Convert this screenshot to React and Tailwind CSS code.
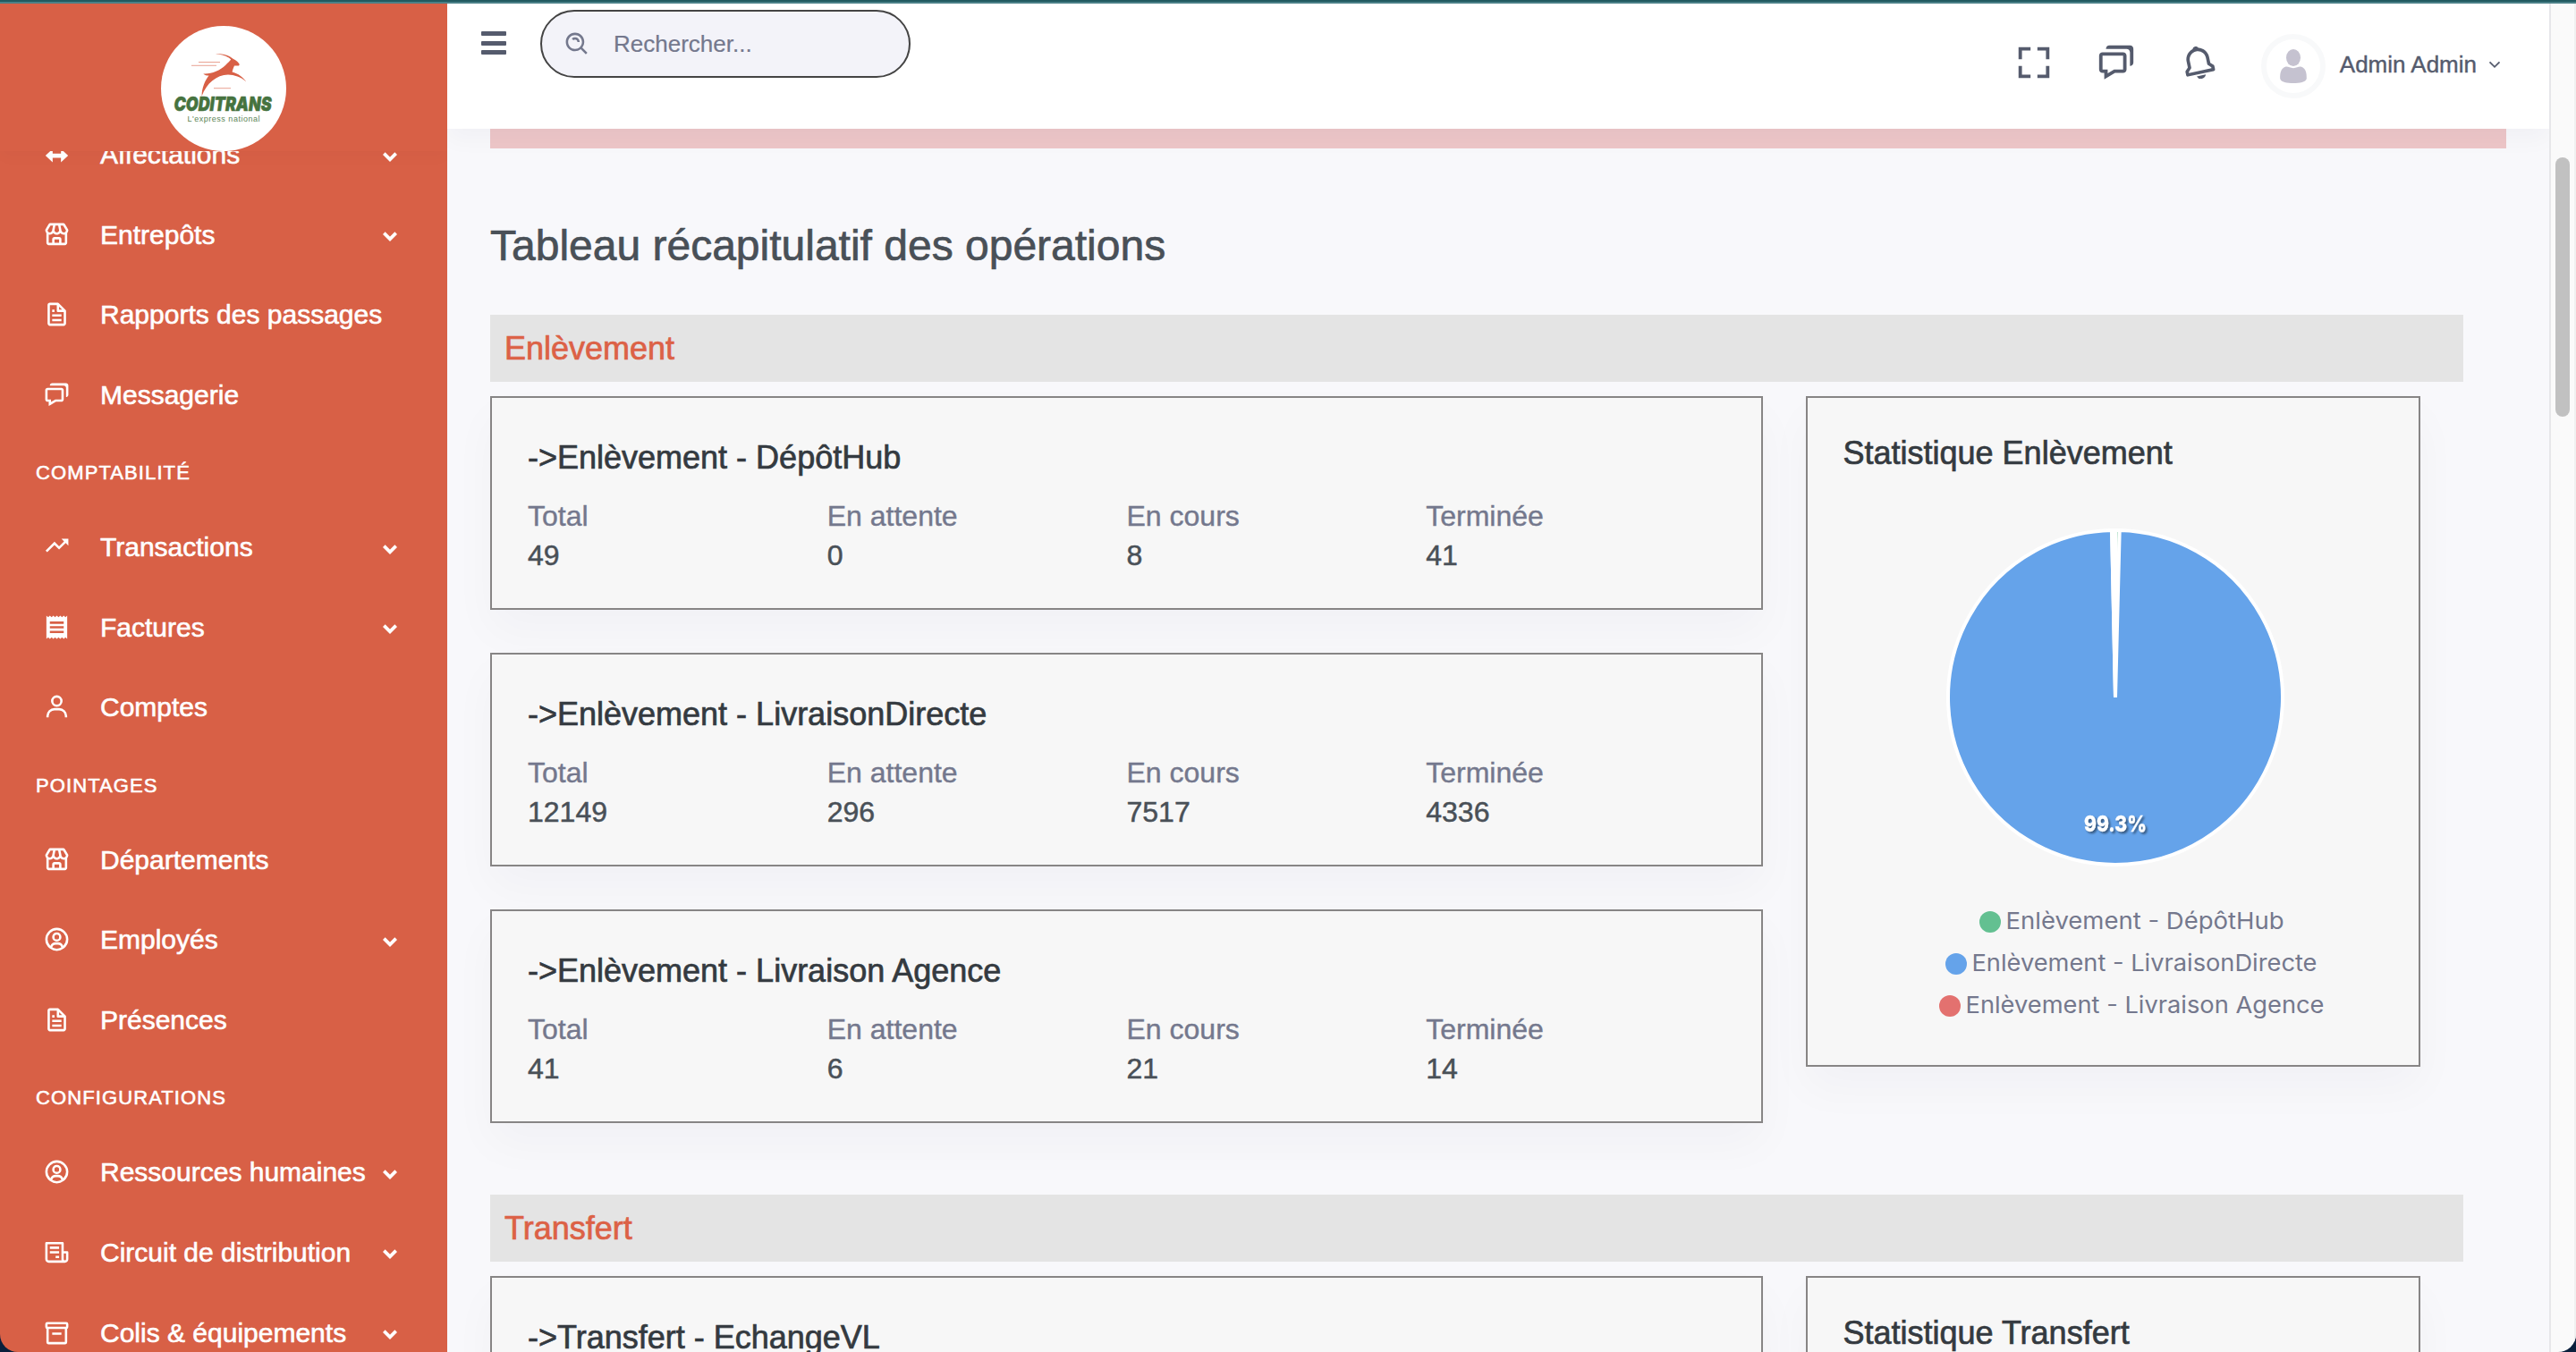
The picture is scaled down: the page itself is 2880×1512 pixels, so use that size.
import {
  BiStore, BiFile, BiChat, BiTrendingUp, BiUser, BiUserCircle,
  BiReceipt, BiSearchAlt, BiFullscreen, BiBell,
} from "react-icons/bi";

function ArrowsIcon({ className }) {
  return (
    <svg viewBox="0 0 24 24" fill="currentColor" className={className}>
      <path d="M2.2 13.2 L8.4 7.4 V11.4 H15.6 V7.4 L21.8 13.2 L15.6 19 V15 H8.4 V19 Z" />
    </svg>
  );
}

function ReceiptIcon({ className }) {
  return (
    <svg viewBox="0 0 24 24" fill="currentColor" className={className}>
      <path d="M18 9H6V7h12m0 6H6v-2h12m0 6H6v-2h12M3 22l1.500-1.200L6 22l1.500-1.200L9 22l1.500-1.200L12 22l1.500-1.200L15 22l1.500-1.200L18 22l1.500-1.200L21 22V2l-1.500 1.200L18 2l-1.500 1.200L15 2l-1.500 1.200L12 2l-1.500 1.200L9 2L7.500 3.200L6 2L4.500 3.200L3 2Z" />
    </svg>
  );
}

function BoxIcon({ className }) {
  return (
    <svg viewBox="0 0 24 24" fill="none" stroke="currentColor" strokeWidth="2" className={className}>
      <rect x="3" y="3.700" width="18" height="4" rx="0.8" />
      <path d="M4 8 V20 a1 1 0 0 0 1 1 H19 a1 1 0 0 0 1 -1 V8 M8 12.800 H16" />
    </svg>
  );
}

const menu = [
  { label: "Affectations", icon: ArrowsIcon, more: true },
  { label: "Entrepôts", icon: BiStore, more: true },
  { label: "Rapports des passages", icon: BiFile },
  { label: "Messagerie", icon: BiChat },
  { section: "COMPTABILITÉ" },
  { label: "Transactions", icon: BiTrendingUp, more: true },
  { label: "Factures", icon: ReceiptIcon, more: true },
  { label: "Comptes", icon: BiUser },
  { section: "POINTAGES" },
  { label: "Départements", icon: BiStore },
  { label: "Employés", icon: BiUserCircle, more: true },
  { label: "Présences", icon: BiFile },
  { section: "CONFIGURATIONS" },
  { label: "Ressources humaines", icon: BiUserCircle, more: true },
  { label: "Circuit de distribution", icon: BiReceipt, more: true },
  { label: "Colis & équipements", icon: BoxIcon, more: true },
];

const pickups = [
  { title: "->Enlèvement - DépôtHub", values: ["49", "0", "8", "41"] },
  { title: "->Enlèvement - LivraisonDirecte", values: ["12149", "296", "7517", "4336"] },
  { title: "->Enlèvement - Livraison Agence", values: ["41", "6", "21", "14"] },
];

const labels = ["Total", "En attente", "En cours", "Terminée"];

function Chevron({ className, width }) {
  return (
    <svg viewBox="0 0 16 11" fill="none" stroke="currentColor" strokeWidth={width} className={className}>
      <path d="M1.3 1.6 L8 8.3 L14.7 1.6" />
    </svg>
  );
}

function Logo() {
  return (
    <svg viewBox="0 0 140 140" className="h-[140px] w-[140px] shrink-0">
      <circle cx="70" cy="70" r="70" fill="#fff" />
      <g fill="#d86046">
        <path d="M61 31.600 C68 30 76 33 81 37 C84 38.500 87 41 87.800 43 L87 44.600 L82 44.600 C81 47 80 49 79.600 51.600 C86 53 92 58 95.300 62.400 C89 57 82 54.800 75 54.600 C62 55 51 64 45.600 78.600 C45.500 70 49 61 53.500 55.500 C51 55.500 49 55 47.300 53.400 C56 54 66 50 72 44 C75 41 77 39 78.200 37.500 C73 33 67 31.600 61 31.600 Z" />
      </g>
      <g stroke="#d86046" strokeWidth="0.9" opacity="0.65">
        <path d="M42 40.500 H66 M34 44.300 H62 M59 69.700 H78" />
      </g>
      <text x="69" y="95" textAnchor="middle" textLength="109" lengthAdjust="spacingAndGlyphs"
        fontFamily="Inter" fontWeight="900" fontStyle="italic" fontSize="22" fill="#46733f" stroke="#46733f" strokeWidth="0.6">CODITRANS</text>
      <text x="70" y="107" textAnchor="middle" textLength="81" fontFamily="Liberation Sans" fontSize="9" fill="#5c8556">L'express national</text>
    </svg>
  );
}

function Sidebar() {
  return (
    <aside className="flex w-[500px] shrink-0 flex-col overflow-hidden bg-[#d86046] text-white">
      <div className="z-10 flex h-[165px] shrink-0 justify-center bg-[#d86046] pt-[25px] shadow-[0_8px_16px_rgba(18,38,63,0.02)]">
        <Logo />
      </div>
      <nav className="-mt-[40.800px] flex flex-col">
        {menu.map((m) => {
          if (m.section) {
            return (
              <div key={m.section} className="flex h-[80.800px] shrink-0 items-center pt-[3px] pl-[40px] text-[22px] tracking-[1.1px] [-webkit-text-stroke:0.6px_currentColor]">
                {m.section}
              </div>
            );
          }
          const Icon = m.icon;
          return (
            <div key={m.label} className="flex h-[89.600px] shrink-0 items-center pr-[56px] pl-[47.500px]">
              <Icon className="-mt-[1px] h-[31px] w-[31px] shrink-0" />
              <span className="-mt-[1px] ml-[33.500px] flex-1 text-[30px] whitespace-nowrap [-webkit-text-stroke:0.6px_currentColor]">{m.label}</span>
              {m.more && <Chevron width={3.800} className="mt-[4px] h-[11px] w-[16px] shrink-0" />}
            </div>
          );
        })}
      </nav>
    </aside>
  );
}

function Topbar() {
  return (
    <header className="z-10 flex h-[140px] shrink-0 bg-white text-[#555b6d] shadow-[0_12px_24px_rgba(18,38,63,0.03)]">
      <div className="mt-[31px] ml-[38px] flex h-[26px] w-[28px] flex-col justify-between">
        <span className="h-[5px] rounded-[1px] bg-[#555b6d]" />
        <span className="h-[5px] rounded-[1px] bg-[#555b6d]" />
        <span className="h-[5px] rounded-[1px] bg-[#555b6d]" />
      </div>
      <div className="mt-[7px] ml-[38px] flex h-[76px] w-[414px] items-center rounded-full border-2 border-[#444] bg-[#f3f3f9] pl-[24px] text-[26px] text-[#74788d]">
        <BiSearchAlt className="h-[31px] w-[31px]" />
        <span className="ml-[25px] [-webkit-text-stroke:0.2px_currentColor]">Rechercher...</span>
      </div>
      <div className="ml-auto flex h-[132px] items-center">
        <BiFullscreen className="h-[46px] w-[46px]" />
        <BiChat className="ml-[46px] h-[46px] w-[46px]" />
        <BiBell className="ml-[47px] h-[44px] w-[44px] -rotate-12" />
        <div className="mt-[8px] ml-[48px] flex h-[72px] w-[72px] items-center justify-center rounded-full border-[6px] border-[#f8f9fa]">
          <svg viewBox="0 0 30 38" className="h-[38px] w-[30px]" fill="#c5c2d0">
            <ellipse cx="15" cy="9.500" rx="8" ry="9.500" />
            <path d="M6 19.800 C9 19 11 21.200 15 21.200 C19 21.200 21 19 24 19.800 C29 21.500 30 27 29.800 33 C29 37 22 38 15 38 C8 38 1 37 0.200 33 C0 27 1 21.500 6 19.800 Z" />
          </svg>
        </div>
        <span className="mt-[5px] ml-[16px] text-[26px] whitespace-nowrap [-webkit-text-stroke:0.4px_currentColor]">Admin Admin</span>
        <Chevron width={2.200} className="mt-[5px] mr-[54px] ml-[13px] h-[9px] w-[14px]" />
      </div>
    </header>
  );
}

function SectionBar({ children }) {
  return (
    <h2 className="flex h-[75px] w-[2206px] shrink-0 items-center bg-[#e4e4e4] pl-[16px] text-[36px] text-[#dc6146] [-webkit-text-stroke:0.7px_currentColor]">
      {children}
    </h2>
  );
}

function StatCard({ title, values }) {
  return (
    <div className="h-[239px] w-[1423px] border-2 border-[#878585] bg-[#f7f7f7] px-[40px] pt-[45px] shadow-[0_24px_48px_rgba(18,38,63,0.03)]">
      <h3 className="text-[36px] leading-[44px] text-[#343a40] [-webkit-text-stroke:0.7px_currentColor]">{title}</h3>
      <div className="mt-[21px] grid grid-cols-4 text-[32px] leading-[44px]">
        {values.map((v, i) => (
          <div key={labels[i]}>
            <p className="text-[#74788d] [-webkit-text-stroke:0.4px_currentColor]">{labels[i]}</p>
            <p className="text-[#495057] [-webkit-text-stroke:0.5px_currentColor]">{v}</p>
          </div>
        ))}
      </div>
    </div>
  );
}

const slices = [
  { name: "Enlèvement - DépôtHub", value: 49, color: "#63c091", dot: "bg-[#63c091]", length: 311, row: "ml-[192px]" },
  { name: "Enlèvement - LivraisonDirecte", value: 12149, color: "#65a3ea", dot: "bg-[#65a3ea]", length: 386, row: "ml-[154px]" },
  { name: "Enlèvement - Livraison Agence", value: 41, color: "#e3716f", dot: "bg-[#e3716f]", length: 401, row: "ml-[147px]" },
];

function Pie() {
  const total = slices.reduce((sum, s) => sum + s.value, 0);
  const at = (share) => {
    const a = share * 2 * Math.PI - Math.PI / 2;
    return `${200 + 187 * Math.cos(a)} ${200 + 187 * Math.sin(a)}`;
  };
  let from = 0;
  return (
    <svg viewBox="0 0 400 400" className="h-[400px] w-[400px]">
      {slices.map((s) => {
        const to = from + s.value / total;
        const d = `M200 200 L${at(from)} A187 187 0 ${to - from > 0.5 ? 1 : 0} 1 ${at(to)} Z`;
        from = to;
        return <path key={s.name} d={d} fill={s.color} stroke="#fff" strokeWidth="4" />;
      })}
      <text x="200" y="350" textAnchor="middle" textLength="70" lengthAdjust="spacingAndGlyphs" fontFamily="Inter" fontWeight="800" fontSize="25"
        fill="#fff" stroke="#fff" strokeWidth="0.4" className="[filter:drop-shadow(2px_2px_1px_rgba(0,0,0,0.45))]">99.3%</text>
    </svg>
  );
}

function ChartCard() {
  return (
    <div className="flex h-[750px] w-[687px] flex-col border-2 border-[#878585] bg-[#f7f7f7] pt-[40px] shadow-[0_24px_48px_rgba(18,38,63,0.03)]">
      <h3 className="pl-[39.500px] text-[36px] leading-[44px] text-[#343a40] [-webkit-text-stroke:0.7px_currentColor]">Statistique Enlèvement</h3>
      <div className="mt-[51px] pl-[144px]">
        <Pie />
      </div>
      <div className="mt-[10px] flex flex-col">
        {slices.map((s) => (
          <div key={s.name} className="flex h-[47px]">
            <div className={s.row + " flex items-start gap-[3px] pt-[29px]"}>
              <span className={s.dot + " h-[24px] w-[24px] rounded-full"} />
              <svg className="-mt-[6px] h-[36px] w-[404px] overflow-visible">
                <text x="2.500" y="26" textLength={s.length} lengthAdjust="spacingAndGlyphs" fontFamily="Inter" fontSize="26" fill="#74788d">{s.name}</text>
              </svg>
            </div>
          </div>
        ))}
      </div>
    </div>
  );
}

export default function App() {
  return (
    <div className="flex h-[1512px] w-[2880px] flex-col overflow-hidden bg-[#0a1f3c] font-['Liberation_Sans',Arial,sans-serif]">
      <div className="h-[4px] shrink-0 border-b-2 border-[#4a8087] bg-[#215a60]" />
      <div className="flex h-[1508px] overflow-hidden rounded-b-[20px]">
        <Sidebar />
        <div className="flex w-[2350px] shrink-0 flex-col overflow-hidden bg-[#f8f8fb]">
          <Topbar />
          <main className="flex flex-col pl-[48px]">
            <div className="h-[22px] w-[2254px] shrink-0 bg-[#edc6c8]" />
            <h1 className="mt-[80px] text-[48px] leading-[58px] text-[#495057] [-webkit-text-stroke:0.7px_currentColor]">
              Tableau récapitulatif des opérations
            </h1>
            <div className="mt-[48px] flex flex-col">
              <SectionBar>Enlèvement</SectionBar>
              <div className="mt-4 flex gap-[48px]">
                <div className="flex flex-col gap-[48px]">
                  {pickups.map((p) => <StatCard key={p.title} {...p} />)}
                </div>
                <ChartCard />
              </div>
            </div>
            <div className="mt-[80px] flex flex-col">
              <SectionBar>Transfert</SectionBar>
              <div className="mt-4 flex gap-[48px]">
                <div className="h-[239px] w-[1423px] border-2 border-[#878585] bg-[#f7f7f7] px-[40px] pt-[45px] shadow-[0_24px_48px_rgba(18,38,63,0.03)]">
                  <h3 className="text-[36px] leading-[44px] text-[#343a40] [-webkit-text-stroke:0.7px_currentColor]">{"->Transfert - EchangeVL"}</h3>
                </div>
                <div className="h-[239px] w-[687px] border-2 border-[#878585] bg-[#f7f7f7] pt-[40px] pl-[39.500px] shadow-[0_24px_48px_rgba(18,38,63,0.03)]">
                  <h3 className="text-[36px] leading-[44px] text-[#343a40] [-webkit-text-stroke:0.7px_currentColor]">Statistique Transfert</h3>
                </div>
              </div>
            </div>
          </main>
        </div>
        <div className="flex w-[30px] shrink-0 justify-center border-r-2 border-l-2 border-r-[#f0f0f0] border-l-[#e7e7ea] bg-[#fafafa] pt-[172px]">
          <span className="h-[290px] w-[16px] rounded-full bg-[#c1c1c1]" />
        </div>
      </div>
    </div>
  );
}
